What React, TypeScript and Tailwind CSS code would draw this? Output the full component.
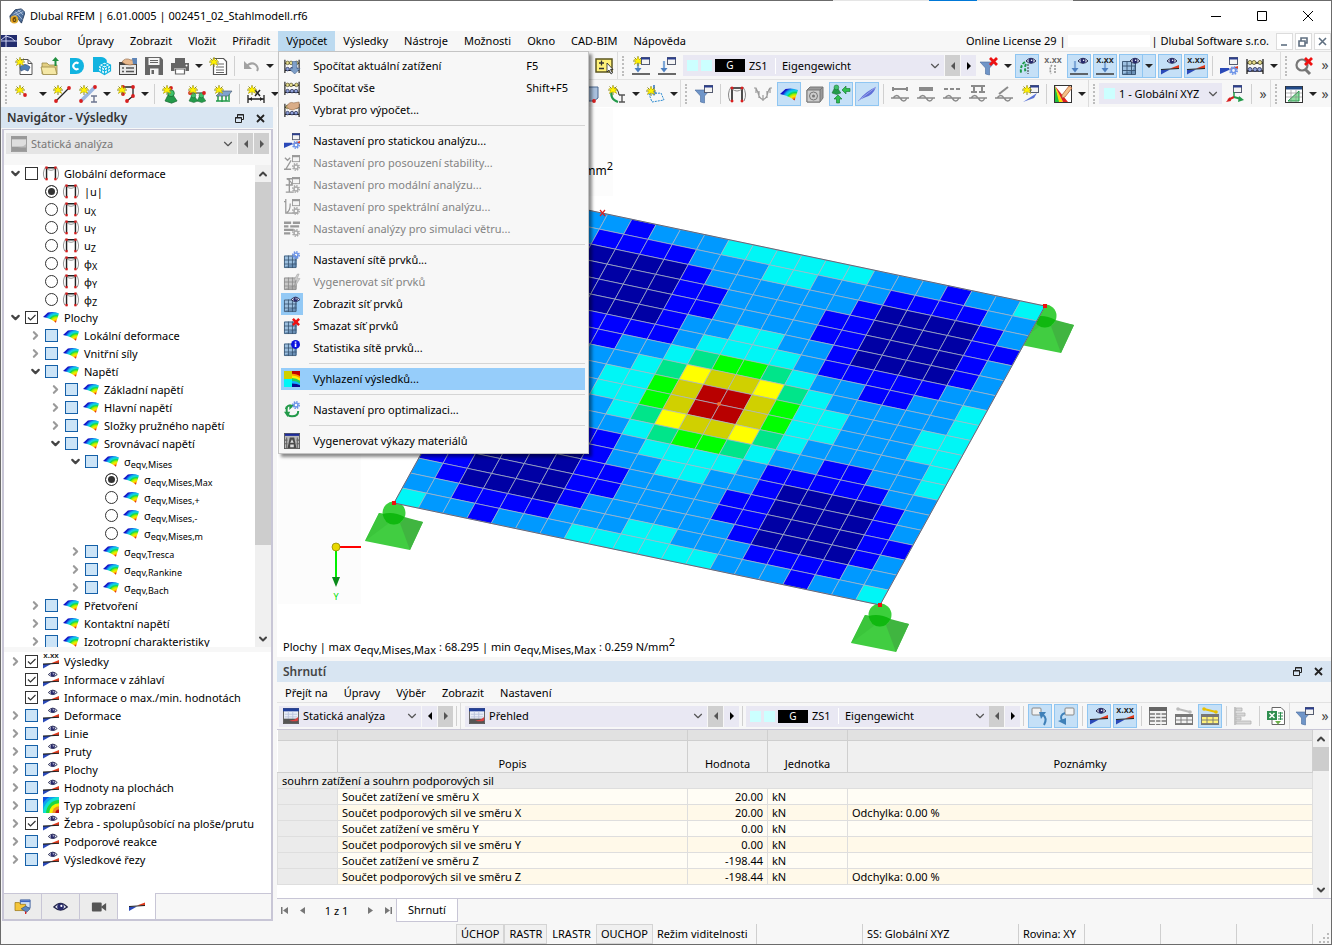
import type { ReactNode } from "react";
import { ChevronDown, ChevronRight, ChevronUp } from "lucide-react";
import clsx from "clsx";

/* ---------- icon fragments, all drawn on an 18 x 18 grid ---------- */

const Star = ({ x = 0, y = 0 }: { x?: number; y?: number }) => (
  <g transform={`translate(${x} ${y})`}>
    <path d="M5 0v10M0 5h10M1.5 1.5l7 7M8.5 1.5l-7 7" stroke="#8a8a20" strokeWidth="1" />
    <path d="M5 1l1.2 2.4L9 3.5 7.2 5.2 8.5 8 5 6.8 1.5 8l1.200-2.800L1 3.500l2.800-.1z" fill="#fff200" stroke="#c8b400" strokeWidth=".5" />
  </g>
);

const Win = ({ x = 9, y = 0, gray = false }: { x?: number; y?: number; gray?: boolean }) => (
  <g transform={`translate(${x} ${y})`}>
    <rect x=".5" y=".5" width="8" height="7" fill="#f4f4f4" stroke={gray ? "#999" : "#555c70"} />
    <path d="M0 1.500h9" stroke={gray ? "#999" : "#2c3f8f"} strokeWidth="2" />
  </g>
);

const Eye = ({ x = 8, y = 0 }: { x?: number; y?: number }) => (
  <g transform={`translate(${x} ${y})`}>
    <path d="M0 4Q5-1.500 10 4 5 8.500 0 4z" fill="#e6e9f7" stroke="#23264a" />
    <circle cx="5" cy="3.800" r="2.500" fill="#27296b" />
    <circle cx="5.600" cy="3.200" r=".8" fill="#fff" />
  </g>
);

const Gear = ({ x = 9, y = 9, gray = false }: { x?: number; y?: number; gray?: boolean }) => (
  <g transform={`translate(${x} ${y})`} stroke={gray ? "#aaa" : "#6c93e8"} fill="none">
    <circle cx="4.5" cy="4.5" r="3.6" strokeWidth="1.8" strokeDasharray="1.6 1.2" />
    <circle cx="4.5" cy="4.5" r="2.2" strokeWidth="1.6" />
  </g>
);

const Wedge = ({ y = 0 }: { y?: number }) => (
  <g transform={`translate(0 ${y})`}>
    <path d="M0 12.500h9L0 17.500z" fill="#2a49b8" />
    <path d="M9 11.500L18 8v4z" fill="#e03a1c" />
    <path d="M0 12.500L18 11.500" stroke="#222" strokeWidth="1.2" />
  </g>
);

const Xxx = ({ gray = false }: { gray?: boolean }) => (
  <text x="9" y="6" textAnchor="middle" fontSize="9" fontWeight="700" fontFamily="Liberation Sans, sans-serif" fill={gray ? "#666" : "#222"}>
    x.xx
  </text>
);

const Mesh = ({ gray = false }: { gray?: boolean }) => (
  <g>
    <rect x="0" y="4" width="14" height="14" fill={gray ? "#c9c9c9" : "#9dc0e0"} />
    <path d="M0 17h14V4l-3 9z" fill={gray ? "#aaa" : "#6a90b6"} />
    <path d="M.5 4.500h13v13H.5zM5 4v14M9.500 4v14M0 9h14M0 13.500h14" fill="none" stroke={gray ? "#888" : "#35506e"} strokeWidth=".9" />
  </g>
);

const LoadArrow = ({ x = 6 }: { x?: number }) => (
  <g>
    <path d={`M${x} 4v9`} stroke="#7fa8d8" strokeWidth="2.2" />
    <path d={`M${x - 3.5} 11h7l-3.500 4.500z`} fill="#4c7fc0" />
    <path d="M0 17h18" stroke="#444" strokeWidth="1.6" />
  </g>
);

const Abacus = () => (
  <g>
    <path d="M1 2v15M17 2v15M1 6h16M1 14h16" stroke="#222" strokeWidth="1.3" />
    <g fill="#e6dc8c" stroke="#55502a" strokeWidth=".8">
      <circle cx="4" cy="5.500" r="2" /><circle cx="8" cy="5.500" r="2" /><circle cx="14" cy="5.500" r="2" />
    </g>
    <g fill="#8fa0d8" stroke="#222a50" strokeWidth=".8">
      <circle cx="4" cy="12.500" r="2" /><circle cx="9" cy="12.500" r="2" /><circle cx="13.500" cy="12.500" r="2" />
    </g>
  </g>
);

const Frame = () => (
  <g fill="none">
    <path d="M4 16V3h10v13" stroke="#222" strokeWidth="1.600" />
    <path d="M4 4q5 4 10 0M3 2Q-1.500 9 2 16M15 2q4.500 7 1 14" stroke="#888" strokeWidth="1" />
    <path d="M3 2h2v2H3zM13 2h2v2h-2zM3 15h2v2H3zM13 15h2v2h-2z" fill="#d81e1e" stroke="#d81e1e" strokeWidth=".6" />
  </g>
);

const Surface = () => (
  <g>
    <path d="M0 9L5.500 4Q12 2.500 18 5L14.500 15.500Q10 11 0 9z" fill="url(#rainbow)" />
  </g>
);

const Funnel = () => <path d="M0 5h15L9.500 11v7l-4-1v-6z" fill="#6f95c8" stroke="#47699c" strokeWidth=".6" />;

const RedX = ({ x = 9, y = 0 }: { x?: number; y?: number }) => (
  <path transform={`translate(${x} ${y})`} d="M1 1l7 7M8 1L1 8" stroke="#ee1111" strokeWidth="2.8" />
);

const Cone = ({ x = 0, y = 0, s = 1 }: { x?: number; y?: number; s?: number }) => (
  <g transform={`translate(${x} ${y}) scale(${s})`}>
    <path d="M0 10l3-6h4l4 6-5 2z" fill="#239a4a" stroke="#12602b" strokeWidth=".6" />
    <circle cx="5.500" cy="3" r="3" fill="#3fc06a" stroke="#12602b" strokeWidth=".6" />
  </g>
);

const Node = ({ x, y }: { x: number; y: number }) => <circle cx={x} cy={y} r="1.9" fill="#d81e1e" />;

const Wave = ({ top }: { top: string }) => (
  <g fill="none" stroke="#8a8a8a" strokeWidth="1.4">
    <path d="M0 13h18M2 13q4-5 7 0 4 6 7 0" />
    <path d={top} strokeWidth="2" />
  </g>
);

const Table = ({ hi = false, y = 0 }: { hi?: boolean; y?: number }) => (
  <g>
    <rect x=".5" y={y + 0.5} width="17" height={17 - y} fill={hi ? "#fff27a" : "#f2f2f2"} stroke="#777" />
    <path d={`M0 ${y + 1.5}h18`} stroke="#777" strokeWidth="3" />
    <path d={`M6 ${y}V18M12 ${y}V18M0 ${y + 6}h18M0 ${y + 9.5}h18`} stroke="#777" strokeWidth=".9" />
  </g>
);

const icons: Record<string, ReactNode> = {
  newModel: (
    <g>
      <path d="M5 2.500h8l4 4v11H5z" fill="#fff" stroke="#555" />
      <path d="M13 2.500v4h4" fill="none" stroke="#555" />
      <path d="M5 10q5-5 10 0l-2 4q-4-3-7 0z" fill="#4d7fb5" stroke="#2c4a78" strokeWidth=".7" />
      <Star />
    </g>
  ),
  open: (
    <g>
      <path d="M1 6h5l2 2h8v9H1z" fill="#e3cf83" stroke="#9b8a48" strokeWidth=".8" />
      <path d="M0 10h14l2 7.500H2z" fill="#f5e8a6" stroke="#9b8a48" strokeWidth=".8" />
      <path d="M13.500 9V4H11l3.500-4L18 4h-2.500v5z" fill="#1f8f3f" />
    </g>
  ),
  cloud: (
    <g>
      <path d="M3 1h6a8 8 0 010 16H3z" fill="#11b3e0" />
      <path d="M11.500 6.500a3.200 3.200 0 100 5" fill="none" stroke="#fff" strokeWidth="2" />
    </g>
  ),
  block: (
    <g>
      <path d="M0 0h8a7 7 0 016 4l-4 11H0z" fill="#11b3e0" />
      <path d="M11.500 5l6 3v6l-6 3.500-6-3.500V8z" fill="#d5f2fb" stroke="#11b3e0" strokeWidth="1.200" />
      <path d="M5.500 8l6 3 6-3M11.500 11v6.500M8.500 6.500l6 3v6M14.500 6.500l-6 3v6M5.500 11l6 3 6-3" fill="none" stroke="#11b3e0" />
    </g>
  ),
  form: (
    <g>
      <rect x=".5" y="5.500" width="17" height="12" fill="#e8e8e8" stroke="#444" />
      <path d="M1 7h16" stroke="#444" strokeWidth="2" />
      <path d="M3 11h2M7 11h8M3 14.500h2M7 14.500h8" stroke="#555" strokeWidth="1.500" />
      <path d="M3 5q3-5 9-2l5-1v5l-6 1q-5 0-8-3z" fill="#e8b88c" stroke="#8a6242" strokeWidth=".6" />
      <path d="M13 1h5v6h-4z" fill="#5f86b8" />
    </g>
  ),
  save: (
    <g>
      <path d="M0 0h15.500L18 2.500V18H0z" fill="#666" />
      <path d="M3.500 1h11v7h-11zM5 11.500h8.500V18H5z" fill="#f5f5f5" />
      <path d="M5 3.500h8M5 5.500h8" stroke="#666" />
      <path d="M6.500 13H9v4H6.500z" fill="#666" />
    </g>
  ),
  print: (
    <g>
      <path d="M4 1h10v5H4z" fill="#666" />
      <path d="M0 6h18v8h-3.500v-3h-11v3H0z" fill="#666" />
      <path d="M4.500 12h9v5h-9z" fill="#fff" stroke="#666" strokeWidth="1.200" />
      <circle cx="15.500" cy="8.500" r="1" fill="#fff" />
    </g>
  ),
  newDoc: (
    <g>
      <path d="M4.500 1.500h10l3 3v13h-13z" fill="#fff" stroke="#555" strokeWidth="1.200" />
      <path d="M7 7h8M7 10h8M7 13h8M7 15.500h8" stroke="#666" />
      <Star />
    </g>
  ),
  undo: (
    <g>
      <path d="M4 10Q9 4 14 8q3 3 1 6" fill="none" stroke="#a2a2a2" strokeWidth="2" />
      <path d="M2 4v8h8z" fill="#a2a2a2" />
    </g>
  ),
  note: (
    <g>
      <rect x="1" y="2" width="16" height="13" fill="#fff27a" stroke="#5c5620" strokeWidth="1.500" />
      <path d="M4 6h5M6.500 3.500v5M4 11.500h5" stroke="#333" strokeWidth="1.300" />
      <path d="M12 6v9l2-2 2 4 1.500-1-2-3.500H18z" fill="#fff" stroke="#222" strokeWidth=".8" />
    </g>
  ),
  loadNew: <g><LoadArrow /><Star x={1} y={-1} /><Win /></g>,
  load: <g><LoadArrow /><Win /></g>,
  filterX: <g><Funnel /><RedX /></g>,
  filterWin: <g><Funnel /><Win /></g>,
  supEye: <g><path d="M7 5q-5 3-4 11M8 7q-2 4 0 9" stroke="#1f9a4a" strokeWidth="2" fill="none" strokeDasharray="3 1.500" /><path d="M10 7v10" stroke="#333" strokeDasharray="2 1" /><Eye /></g>,
  supXxx: <g><Xxx gray /><path d="M8 8q-3 3-1 9M11 8v9" stroke="#999" strokeWidth="1.600" fill="none" strokeDasharray="2 1" /></g>,
  loadEye: <g><LoadArrow x={5} /><Eye /></g>,
  loadXxx: <g><LoadArrow x={9} /><Xxx /></g>,
  meshEye: <g><Mesh /><Eye /></g>,
  meshGear: <g><Mesh /><Gear y={-1} /></g>,
  meshBolt: <g><Mesh gray /><path d="M15 0l-4 7h3l-2 8 6-10h-3l2-5z" fill="#ccc" stroke="#999" strokeWidth=".5" /></g>,
  meshX: <g><Mesh /><RedX /></g>,
  meshInfo: (
    <g>
      <Mesh />
      <circle cx="13" cy="5" r="5" fill="#0b12e0" />
      <path d="M13 4v4M13 1.800v1.300" stroke="#fff" strokeWidth="1.800" />
    </g>
  ),
  resEye: <g><Wedge /><Eye x={6} y={0} /></g>,
  resXxx: <g><Wedge /><Xxx /></g>,
  wedge: <Wedge y={-3} />,
  calcSet: <g><path d="M0 11h9v2L0 17z" fill="#2a49b8" /><path d="M9 12l9-3v3z" fill="#e03a1c" /><Win /><Gear /></g>,
  abacus: <Abacus />,
  abacusDown: <g><Abacus /><path d="M9.500 4h5v8H18l-6 6-6-6h3.500z" fill="#7e9fc8" stroke="#4c6a94" strokeWidth=".7" /></g>,
  abacusHand: <g><Abacus /><path d="M3 5q3-6 8-4l6-1v6l-7 3q-5 0-7-4z" fill="#d9ad88" stroke="#8a6242" strokeWidth=".6" /></g>,
  stability: <g><path d="M1 3l3 3 3-3M2 16l6-10M0 16h8" stroke="#999" strokeWidth="1.500" fill="none" /><Win gray /><Gear gray /></g>,
  modal: <g><path d="M6 1v16M2 17h9M3 2q6 3 6 7M2 9h8M3 2h6" stroke="#999" strokeWidth="1.500" fill="none" /><Win gray /><Gear gray /></g>,
  spectral: <g><path d="M2 0v16h14M2 3l-2 0M3 15q4-1 4-10" stroke="#999" strokeWidth="1.400" fill="none" /><Win gray /><Gear gray /></g>,
  wind: <g><path d="M0 2h8M10 2h8M0 6h5M7 6h10M0 10h11M0 14h7" stroke="#999" strokeWidth="2.600" /><Gear gray /></g>,
  smooth: (
    <g>
      <rect width="9" height="9" fill="#d0d000" /><rect y="9" width="9" height="9" fill="#00f6f6" />
      <rect x="9" width="9" height="18" fill="#c00000" />
      <path d="M9 3q6 0 9 3v12H9z" fill="#ff9a00" /><path d="M9 5q5 0 9 3v10H9z" fill="#fff200" />
      <path d="M9 8q5 0 9 3v7H9z" fill="#20d060" /><path d="M9 11q5 0 9 3v4H9z" fill="#10b0ff" /><path d="M9 14q6 0 9 2v2H9z" fill="#0a0a90" />
    </g>
  ),
  optimize: (
    <g>
      <path d="M3 5v5q0 6 6 6 7 0 7-6" fill="none" stroke="#239a4a" strokeWidth="2.200" />
      <path d="M0 11h7l-3 6zM6 3h6L6 9z" fill="#239a4a" /><path d="M8 4Q4 3 2 8" stroke="#239a4a" strokeWidth="2" fill="none" />
      <Gear y={-1} />
    </g>
  ),
  bill: (
    <g>
      <rect x=".5" y=".5" width="17" height="17" fill="#b9b9b9" stroke="#555" />
      <path d="M1 2h16" stroke="#1e2c9a" strokeWidth="2.500" />
      <path d="M3 5v12M15 5v12M1 8h3M1 12h3M14 8h3M14 12h3" stroke="#666" strokeWidth="1.200" />
      <path d="M4 17l2.500-12h5L14 17z" fill="#4a4a4a" /><path d="M9 7l2 4H7zM7 13h4v3H7z" fill="#ddd" />
    </g>
  ),
  search: <g><circle cx="7" cy="8" r="5.500" fill="none" stroke="#777" strokeWidth="2.200" /><path d="M10 12l5 5" stroke="#777" strokeWidth="3" /><RedX /></g>,
  point: <g><Star /><Node x={10} y={10} /></g>,
  line: <g><path d="M3 16L15 4" stroke="#222" strokeWidth="1.300" /><Node x={3} y={16} /><Node x={16} y={3} /><Star /></g>,
  member: (
    <g>
      <path d="M2 16L16 2" stroke="#9ab6e0" strokeWidth="3.500" /><Node x={2} y={16} /><Node x={16} y={2} />
      <path d="M12 11h6M12 17h6M15 11v6" stroke="#6b7490" strokeWidth="1.400" /><Star />
    </g>
  ),
  area: <g><path d="M6 9V2h10v9L10 16" fill="none" stroke="#222" strokeWidth="1.300" /><Node x={6} y={9} /><Node x={6} y={2} /><Node x={16} y={2} /><Node x={16} y={11} /><Node x={10} y={16} /><Star /></g>,
  support: <g><Cone x={3} y={5} s={1.1} /><Node x={9} y={3} /><Star /></g>,
  lineSupport: <g><path d="M1 8h16" stroke="#222" /><Cone x={1} y={8} s={0.8} /><Cone x={9} y={8} s={0.8} /><Node x={2} y={8} /><Node x={16} y={8} /><Star /></g>,
  areaSupport: <g><path d="M4 11v5M8 11v6M12 11v5M15 9v6M2 16h14" stroke="#239a4a" strokeWidth="1.500" /><path d="M2 11l5-5h11l-4 5z" fill="#7fa3cf" stroke="#456" strokeWidth=".6" /><Star /></g>,
  dim: <g><path d="M1 10v8M17 10v8M1 14h16" stroke="#222" strokeWidth="1.300" /><path d="M2 14l3-2v4zM16 14l-3-2v4z" fill="#222" /><path d="M8 5l5 6M13 5l-5 6" stroke="#222" strokeWidth="1.500" /><Star /></g>,
  cube: <g><path d="M1 5l5-3h10v11l-4 3H1z" fill="#a9c0dd" stroke="#4a6890" /><Node x={12} y={16} /></g>,
  arc: <g><path d="M4 4q-3 10 6 13" fill="none" stroke="#239a4a" strokeWidth="2" /><path d="M11 10h6M11 17h6M14 10v7" stroke="#555" strokeWidth="1.400" /><path d="M6 3q4 0 5 7" fill="none" stroke="#333" /><Star /></g>,
  areaLoad: <g><path d="M3 9l12-1 3 7-12 2z" fill="none" stroke="#2c8ad0" strokeDasharray="2 1" /><path d="M8 0v8" stroke="#5d92cf" strokeWidth="2" /><path d="M5 7h6l-3 4z" fill="#5d92cf" /><Star y={1} /></g>,
  frame: <Frame />,
  valley: <path d="M0 3h2q2 4 3 8 4 7 8 0 2-8 3-8h2M2 3v5M5 6v7M9 10v6M13 6v7M16 3v5" fill="none" stroke="#9a9a9a" strokeWidth="1.200" />,
  surface: <Surface />,
  solid: (
    <g>
      <path d="M1 5l3-3h13v11l-3 4H1z" fill="#9a9a9a" stroke="#777" />
      <path d="M1 5h13v12H1zM14 5l3-3" fill="#ccc" stroke="#777" />
      <circle cx="7.500" cy="11" r="4" fill="none" stroke="#777" /><circle cx="7.500" cy="11" r="1.500" fill="#777" />
    </g>
  ),
  reactions: (
    <g>
      <Cone x={0} y={0} s={0.8} />
      <path d="M10 5l4-4v2.500h4v3h-4V9zM6 10l4 4H7.500v4h-3v-4H2z" fill="#2fc04f" stroke="#12702b" strokeWidth=".6" />
    </g>
  ),
  plane: <g><path d="M1 15Q8 6 18 2q-3 8-10 10z" fill="#5f6fd8" /><path d="M0 16L18 2" stroke="#98a4ea" /></g>,
  wave1: <Wave top="M2 4h14M2 2v4M16 2v4" />,
  wave2: <Wave top="M2 3h14M2 5h14" />,
  wave3: <Wave top="M1 4h4M7 4h4M13 4h4" />,
  wave4: <Wave top="M2 1h14M5 1v6M13 1v6M2 7h6M10 7h6" />,
  wave5: <Wave top="M4 9l9-7" />,
  starWin: <g><path d="M2 17L16 8l-3 5z" fill="#5a74d8" /><Win /><Star x={1} /></g>,
  colors: (
    <g>
      <rect x=".5" y=".5" width="17" height="17" fill="#fff" stroke="#333" />
      <path d="M1 1v16h5z" fill="#20c040" /><path d="M1 1l8 16H5z" fill="#f5e000" /><path d="M1 1l13 16H9z" fill="#e02020" />
      <path d="M8 10l7-9 3 2-7 9-3 1z" fill="#f4c088" stroke="#b0542a" strokeWidth=".7" />
    </g>
  ),
  axes: <g><Win x={7} /><path d="M8 12V7" stroke="#239a4a" strokeWidth="1.500" /><path d="M8 12L2 15" stroke="#d81e1e" strokeWidth="2" /><path d="M8 12l7 2" stroke="#239a4a" strokeWidth="2" /><path d="M4 12l1 4-5 1z" fill="#d81e1e" /><path d="M13 11l5 4-6 2z" fill="#239a4a" /></g>,
  sheet: (
    <g>
      <rect x=".5" y="1.500" width="17" height="16" fill="#fff" stroke="#333" /><path d="M1 3h16" stroke="#224a88" strokeWidth="3" />
      <path d="M3 16L14 6v10z" fill="#8fe0a0" stroke="#239a4a" />
      <path d="M1 8h16M1 12h16M6 5v12M11 5v12" stroke="#888" strokeWidth=".6" />
    </g>
  ),
  folderView: <g><path d="M6 1h11v9H6z" fill="#cfe0f5" stroke="#3c5c9a" /><path d="M6 2.500h11" stroke="#3c66c0" strokeWidth="2" /><path d="M0 4h5l1 2h6v7H0z" fill="#f4c53a" stroke="#9a7410" strokeWidth=".8" /><path d="M7 11l5-3 5 3-4 4z" fill="#5d88c0" stroke="#2c4a78" strokeWidth=".7" /><path d="M12 14v3" stroke="#d81e1e" strokeWidth="1.500" /></g>,
  eye: <g transform="translate(1 3) scale(1.5)"><Eye x={0} /></g>,
  camera: <g><rect x="1" y="4" width="11" height="10" rx="1" fill="#555" /><path d="M11 9l6-4.500v9z" fill="#555" /></g>,
  contour: (
    <svg width="18" height="18" viewBox="0 0 18 18">
      <rect width="18" height="18" fill="#1050e0" />
      <circle cx="18" cy="18" r="21" fill="#10a0f0" /><circle cx="18" cy="18" r="18" fill="#10e0d0" /><circle cx="18" cy="18" r="14.500" fill="#20d840" />
      <circle cx="18" cy="18" r="11" fill="#f4f000" /><circle cx="18" cy="18" r="7.500" fill="#f09020" /><circle cx="18" cy="18" r="4" fill="#c01010" />
    </svg>
  ),
  result: (
    <g>
      <rect x=".5" y=".5" width="17" height="17" fill="#e9eef8" stroke="#555" />
      <path d="M0 2h18" stroke="#22409a" strokeWidth="3.500" /><path d="M2 7h14M2 10h14M6 4v8M11 4v8" stroke="#b9c2dc" /><path d="M1 12h16v5H1z" fill="#555" />
      <path d="M7 14q6 0 10-4v4q-4 2-10 0z" fill="#e04040" />
    </g>
  ),
  resultGray: (
    <g>
      <rect x=".5" y=".5" width="17" height="17" fill="#dedede" stroke="#999" /><path d="M0 2h18" stroke="#999" strokeWidth="3.500" />
      <path d="M1 12h16v5H1z" fill="#999" /><path d="M7 13q6 0 10-4v4z" fill="#bbb" />
    </g>
  ),
  jumpUp: <g><rect x="1" y="1" width="9" height="7" rx="1" fill="#f2f2f2" stroke="#888" /><path d="M13 18q4-7-2-11" fill="none" stroke="#3f80b8" strokeWidth="2" /><path d="M8 5h7l-5 7z" fill="#3f80b8" /></g>,
  jumpDown: <g><rect x="8" y="1" width="9" height="7" rx="1" fill="#f2f2f2" stroke="#888" /><path d="M8 6q-6 2-3 8" fill="none" stroke="#3f80b8" strokeWidth="2" /><path d="M1 14l8-3v7z" fill="#3f80b8" /></g>,
  table: (
    <g>
      <rect x=".5" y=".5" width="17" height="17" fill="#f2f2f2" stroke="#777" /><path d="M0 2h18" stroke="#666" strokeWidth="4" />
      <path d="M0 7h18M0 10.500h18M0 14h18" stroke="#777" strokeWidth="1.600" /><path d="M6.500 4v14M12 4v14" stroke="#f2f2f2" strokeWidth="1.200" />
    </g>
  ),
  tableBar: <g><Table y={7} /><path d="M3 2l12 3" stroke="#bbb" strokeWidth="2" /><circle cx="3" cy="2" r="1.800" fill="#bbb" /><circle cx="15" cy="5" r="1.800" fill="#bbb" /></g>,
  tableBarOn: <g><Table y={7} hi /><path d="M3 2l12 3" stroke="#e8c000" strokeWidth="2" /><circle cx="3" cy="2" r="1.800" fill="#e8c000" /><circle cx="15" cy="5" r="1.800" fill="#e8c000" /></g>,
  bars: <g fill="#d8d8d8" stroke="#b4b4b4" strokeWidth=".8"><path d="M1 0v18" strokeWidth="1.500" /><path d="M2 1h6v3H2zM2 6h9v3H2zM2 10h5v3H2zM2 14h15v3H2z" /></g>,
  excel: (
    <g>
      <path d="M5 .5h9l3.500 3.500v13.500H5z" fill="#fff" stroke="#666" /><path d="M0 4h10v9H0z" fill="#2f8f50" />
      <path d="M2.500 6l5 5M7.500 6l-5 5" stroke="#fff" strokeWidth="1.500" />
      <path d="M11 6h5M11 9h5M11 12h5M13.500 5v8" stroke="#2f8f50" /><path d="M8 14h6l-3 3.500z" fill="#6cb04a" />
    </g>
  ),
};

const Icon = ({ name, small }: { name: string; small?: boolean }) => (
  <svg viewBox="0 0 18 18" className={clsx("shrink-0 overflow-visible", small ? "size-4" : "size-[18px]")} aria-hidden="true">
    {icons[name]}
  </svg>
);

/* ---------- toolbar parts ---------- */

const Tool = ({ icon, on }: { icon: string; on?: boolean }) => (
  <button
    type="button"
    aria-label={icon}
    className={clsx(
      "mx-px flex h-6 w-6 shrink-0 items-center justify-center border",
      on ? "border-[#8fc6f2] bg-[#c5e0f7]" : "border-transparent"
    )}
  >
    <Icon name={icon} />
  </button>
);

const Arrow = () => (
  <button type="button" aria-label="více" className="flex h-6 w-3 shrink-0 items-center justify-center">
    <svg viewBox="0 0 8 4" className="h-1 w-2"><path d="M0 0h8L4 4z" fill="#222" /></svg>
  </button>
);

const Sep = () => <div className="mx-[3px] h-5 w-px shrink-0 bg-[#d0d0d0]" />;
const Grip = () => <div className="mx-1 h-5 w-0 shrink-0 border-l-2 border-dotted border-[#bdbdbd]" />;
const More = () => <button type="button" aria-label="další" className="w-3 shrink-0 text-[14px] text-[#444]">»</button>;

const Step = ({ dir, off }: { dir: "l" | "r"; off?: boolean }) => (
  <button
    type="button"
    aria-label={dir === "l" ? "předchozí" : "další"}
    className={clsx("flex h-[21px] w-[15px] shrink-0 items-center justify-center", off ? "bg-[#cfcfcf]" : "bg-[#e9e8f3]")}
  >
    <svg viewBox="0 0 4 8" className="h-2 w-1">
      <path d={dir === "l" ? "M4 0v8L0 4z" : "M0 0v8l4-4z"} fill={off ? "#555" : "#000"} />
    </svg>
  </button>
);

const Pick = ({ value, className, disabled }: { value: string; className?: string; disabled?: boolean }) => (
  <span className={clsx("flex h-[21px] min-w-0 items-center", className)}>
    <select aria-label={value} disabled={disabled} className="w-full min-w-0 appearance-none bg-transparent outline-none">
      <option>{value}</option>
    </select>
    <ChevronDown className="mr-[2px] size-[14px] shrink-0 text-[#555]" strokeWidth={2} />
  </span>
);

const LoadCase = ({ className }: { className: string }) => (
  <div className={clsx("flex h-[21px] shrink-0 items-center bg-[#e9e8f3] pl-1", className)}>
    <span className="mr-[3px] size-[11px] bg-[#ccffff]" />
    <span className="mr-[3px] size-[11px] bg-[#ccffff]" />
    <span className="w-[30px] bg-black text-center text-[10px] leading-[13px] text-white">G</span>
    <span className="ml-1 w-[26px]">ZS1</span>
    <span className="mr-[6px] h-4 w-px bg-white" />
    <Pick value="Eigengewicht" className="grow" />
  </div>
);

/* ---------- calculation menu ---------- */

type Item = { icon: string; text: string; key?: string; off?: boolean; on?: boolean; hot?: boolean };

const menu: Item[][] = [
  [
    { icon: "abacusDown", text: "Spočítat aktuální zatížení", key: "F5" },
    { icon: "abacus", text: "Spočítat vše", key: "Shift+F5" },
    { icon: "abacusHand", text: "Vybrat pro výpočet..." },
  ],
  [
    { icon: "calcSet", text: "Nastavení pro statickou analýzu..." },
    { icon: "stability", text: "Nastavení pro posouzení stability...", off: true },
    { icon: "modal", text: "Nastavení pro modální analýzu...", off: true },
    { icon: "spectral", text: "Nastavení pro spektrální analýzu...", off: true },
    { icon: "wind", text: "Nastavení analýzy pro simulaci větru...", off: true },
  ],
  [
    { icon: "meshGear", text: "Nastavení sítě prvků..." },
    { icon: "meshBolt", text: "Vygenerovat síť prvků", off: true },
    { icon: "meshEye", text: "Zobrazit síť prvků", on: true },
    { icon: "meshX", text: "Smazat síť prvků" },
    { icon: "meshInfo", text: "Statistika sítě prvků..." },
  ],
  [{ icon: "smooth", text: "Vyhlazení výsledků...", hot: true }],
  [{ icon: "optimize", text: "Nastavení pro optimalizaci..." }],
  [{ icon: "bill", text: "Vygenerovat výkazy materiálů" }],
];

const CalcMenu = () => (
  <div className="absolute top-full left-0 z-20 w-[311px] border border-[#c4c4c4] bg-[#f7f7f7] px-[2px] pt-[3px] pb-px shadow-[3px_3px_3px_rgba(0,0,0,0.45)]">
    {menu.map((group, g) => (
      <div key={g}>
        {g > 0 && <div className="my-1 mr-px ml-7 h-px bg-[#d5d5d5]" />}
        {group.map((it) => (
          <button
            key={it.text}
            type="button"
            disabled={it.off}
            className={clsx("flex h-[22px] w-[304px] items-center text-left", it.hot && "bg-[#96cdfa]", it.off && "text-[#838383]")}
          >
            <span className={clsx("flex size-[22px] items-center justify-center", it.on && "bg-[#93c9f5]")}>
              <Icon name={it.icon} small />
            </span>
            <span className="ml-[10px] w-[213px]">{it.text}</span>
            <span>{it.key}</span>
          </button>
        ))}
      </div>
    ))}
  </div>
);

const MenuBar = () => (
  <div className="flex h-5 items-center">
    <svg viewBox="0 0 16 12" className="h-3 w-4" aria-hidden="true">
      <rect width="16" height="12" fill="#232d6e" />
      <path d="M0 6h16M5 0v12M5 1L0 5M5 1q6 1 9 5" stroke="#dfe4ff" fill="none" strokeWidth=".9" />
    </svg>
    <nav className="-ml-px flex">
      {["Soubor", "Úpravy", "Zobrazit", "Vložit", "Přiřadit", "Výpočet", "Výsledky", "Nástroje", "Možnosti", "Okno", "CAD-BIM", "Nápověda"].map((m) => (
        <div key={m} className="relative">
          <button type="button" className={clsx("h-5 px-2", m === "Výpočet" && "bg-[#bcdaf0]")}>{m}</button>
          {m === "Výpočet" && <CalcMenu />}
        </div>
      ))}
    </nav>
    <span className="ml-auto">Online License 29 |</span>
    <span className="mx-[2px] h-3 w-[82px] bg-white" />
    <span>| Dlubal Software s.r.o.</span>
    <div className="ml-[7px] flex gap-[2px] text-[#5f6f80]">
      {["M4 11h6", "M3 7h6v5H3zM5 7V4h6v5H9", "M4 4l7 7M11 4l-7 7"].map((d) => (
        <button key={d} type="button" aria-label="okno" className="size-[17px] border border-[#dcdcdc] bg-white">
          <svg viewBox="0 0 15 15"><path d={d} fill="none" stroke="currentColor" strokeWidth="1.6" /></svg>
        </button>
      ))}
    </div>
  </div>
);

const Toolbars = () => (
  <>
    <div className="flex h-7 items-center border-t border-[#e2e2e2]">
      <div className="flex w-[616px] shrink-0 items-center">
        <Grip />
        <Tool icon="newModel" /><Tool icon="open" /><Tool icon="cloud" /><Tool icon="block" /><Tool icon="form" /><Tool icon="save" />
        <Tool icon="print" /><Arrow /><Tool icon="newDoc" /><Sep /><Tool icon="undo" /><Arrow />
        <div className="ml-auto"><Tool icon="note" /></div>
      </div>
      <div className="h-full w-px bg-[#dcdcdc]" />
      <Grip />
      <Tool icon="loadNew" /><Tool icon="load" />
      <div className="w-[3px]" />
      <LoadCase className="w-[261px]" />
      <div className="ml-px flex gap-px"><Step dir="l" off /><Step dir="r" /></div>
      <Tool icon="filterX" /><Arrow />
      <Tool icon="supEye" on /><Tool icon="supXxx" /><Tool icon="loadEye" on /><Tool icon="loadXxx" on />
      <div className="mx-px flex border border-[#8fc6f2] bg-[#c5e0f7]">
        <button type="button" aria-label="meshEye" className="flex h-[22px] w-[23px] items-center justify-center border-r border-[#8fc6f2]"><Icon name="meshEye" /></button>
        <button type="button" aria-label="síť" className="flex w-3 items-center justify-center">
          <svg viewBox="0 0 8 4" className="h-1 w-2"><path d="M0 0h8L4 4z" fill="#222" /></svg>
        </button>
      </div>
      <Tool icon="resEye" on /><Tool icon="resXxx" on /><Sep />
      <Tool icon="calcSet" /><Tool icon="abacus" /><Arrow />
      <div className="h-full w-px bg-[#dcdcdc]" /><Grip />
      <Tool icon="search" />
      <div className="ml-auto"><More /></div>
    </div>
    <div className="flex h-7 items-center border-t border-[#e2e2e2]">
      <div className="flex w-[679px] shrink-0 items-center">
        <Grip />
        <Tool icon="point" /><Arrow /><Tool icon="line" /><Tool icon="member" /><Arrow /><Tool icon="area" /><Arrow /><Sep />
        <Tool icon="support" /><Tool icon="lineSupport" /><Tool icon="areaSupport" /><Sep /><Tool icon="dim" /><Arrow />
        <div className="ml-auto flex">
          <Tool icon="cube" /><Tool icon="arc" /><Arrow /><Tool icon="areaLoad" /><Arrow />
        </div>
      </div>
      <div className="h-full w-px bg-[#dcdcdc]" /><Grip />
      <Tool icon="filterWin" /><Sep />
      <Tool icon="frame" /><Tool icon="valley" /><Tool icon="surface" on /><Tool icon="solid" /><Tool icon="reactions" on /><Tool icon="plane" on />
      <Sep />
      <Tool icon="wave1" /><Tool icon="wave2" /><Tool icon="wave3" /><Tool icon="wave4" /><Tool icon="wave5" /><Tool icon="starWin" />
      <Sep /><Tool icon="colors" /><Arrow />
      <div className="h-full w-px bg-[#dcdcdc]" /><Grip />
      <div className="flex h-[21px] w-[123px] shrink-0 items-center bg-[#e9e8f3] pl-[5px]">
        <span className="mr-1 size-[11px] shrink-0 bg-[#ccffff]" />
        <Pick value="1 - Globální XYZ" className="grow" />
      </div>
      <Tool icon="axes" /><Sep />
      <div className="ml-auto flex h-full items-center">
        <More />
        <div className="ml-px h-full w-px bg-[#dcdcdc]" /><Grip />
        <Tool icon="sheet" /><Arrow /><More />
      </div>
    </div>
  </>
);

/* ---------- navigator ---------- */

type Row = { l: number; t: string; sub?: string; icon: string; open?: boolean; leaf?: boolean; radio?: string; mark?: "on" | "off" };

const pads = ["pl-px", "pl-[21px]", "pl-[41px]", "pl-[61px]", "pl-[81px]"];

const tree: Row[] = [
  { l: 0, t: "Globální deformace", icon: "frame", open: true, mark: "off" },
  { l: 1, t: "|u|", icon: "frame", radio: "u", mark: "on" },
  { l: 1, t: "u", sub: "X", icon: "frame", radio: "u" },
  { l: 1, t: "u", sub: "Y", icon: "frame", radio: "u" },
  { l: 1, t: "u", sub: "Z", icon: "frame", radio: "u" },
  { l: 1, t: "φ", sub: "X", icon: "frame", radio: "u" },
  { l: 1, t: "φ", sub: "Y", icon: "frame", radio: "u" },
  { l: 1, t: "φ", sub: "Z", icon: "frame", radio: "u" },
  { l: 0, t: "Plochy", icon: "surface", open: true, mark: "on" },
  { l: 1, t: "Lokální deformace", icon: "surface" },
  { l: 1, t: "Vnitřní síly", icon: "surface" },
  { l: 1, t: "Napětí", icon: "surface", open: true },
  { l: 2, t: "Základní napětí", icon: "surface" },
  { l: 2, t: "Hlavní napětí", icon: "surface" },
  { l: 2, t: "Složky pružného napětí", icon: "surface" },
  { l: 2, t: "Srovnávací napětí", icon: "surface", open: true },
  { l: 3, t: "σ", sub: "eqv,Mises", icon: "surface", open: true },
  { l: 4, t: "σ", sub: "eqv,Mises,Max", icon: "surface", radio: "s", mark: "on" },
  { l: 4, t: "σ", sub: "eqv,Mises,+", icon: "surface", radio: "s" },
  { l: 4, t: "σ", sub: "eqv,Mises,-", icon: "surface", radio: "s" },
  { l: 4, t: "σ", sub: "eqv,Mises,m", icon: "surface", radio: "s" },
  { l: 3, t: "σ", sub: "eqv,Tresca", icon: "surface" },
  { l: 3, t: "σ", sub: "eqv,Rankine", icon: "surface" },
  { l: 3, t: "σ", sub: "eqv,Bach", icon: "surface" },
  { l: 1, t: "Přetvoření", icon: "surface" },
  { l: 1, t: "Kontaktní napětí", icon: "surface" },
  { l: 1, t: "Izotropní charakteristiky", icon: "surface" },
];

const options: Row[] = [
  { l: 0, t: "Výsledky", icon: "resXxx", mark: "on" },
  { l: 0, t: "Informace v záhlaví", icon: "resEye", mark: "on", leaf: true },
  { l: 0, t: "Informace o max./min. hodnotách", icon: "resEye", mark: "on", leaf: true },
  { l: 0, t: "Deformace", icon: "resEye" },
  { l: 0, t: "Linie", icon: "resEye" },
  { l: 0, t: "Pruty", icon: "resEye" },
  { l: 0, t: "Plochy", icon: "resEye" },
  { l: 0, t: "Hodnoty na plochách", icon: "resEye" },
  { l: 0, t: "Typ zobrazení", icon: "contour" },
  { l: 0, t: "Žebra - spolupůsobící na ploše/prutu", icon: "resEye", mark: "on" },
  { l: 0, t: "Podporové reakce", icon: "resEye" },
  { l: 0, t: "Výsledkové řezy", icon: "resEye" },
];

// box and icon sit one pixel above the text
const TreeRow = ({ r }: { r: Row }) => (
  <div className={clsx("flex h-[18px] items-center whitespace-nowrap", pads[r.l])}>
    <span className="flex w-5 justify-center pb-[2px]">
      {!r.radio && !r.leaf && (r.open ? <ChevronDown className="size-[13px] text-[#444]" strokeWidth={4} /> : <ChevronRight className="size-[13px] text-[#9a9a9a]" strokeWidth={4} />)}
    </span>
    <label className="flex items-center">
      <span className="pb-[2px]">
        {r.radio ? (
          <input
            type="radio"
            name={r.radio}
            defaultChecked={r.mark === "on"}
            className="block size-[13px] appearance-none rounded-full border border-[#333] bg-white checked:bg-[#333] checked:shadow-[inset_0_0_0_2px_white]"
          />
        ) : (
          <span className="grid">
            <input
              type="checkbox"
              defaultChecked={r.mark === "on"}
              className={clsx("col-start-1 row-start-1 size-[13px] appearance-none border", r.mark ? "border-[#333] bg-white" : "border-[#1560a8] bg-[#cce4f7]")}
            />
            {r.mark === "on" && (
              <svg viewBox="0 0 13 13" className="pointer-events-none col-start-1 row-start-1 size-[13px]">
                <path d="M3 6.500l2.500 2.500L10.500 4" fill="none" stroke="#333" strokeWidth="1.2" />
              </svg>
            )}
          </span>
        )}
      </span>
      <span className="mr-[5px] ml-[5px] pb-[2px]"><Icon name={r.icon} small /></span>
      <span>
        {r.t}
        {r.sub && <span className="relative top-[2px] text-[9px]">{r.sub}</span>}
      </span>
    </label>
  </div>
);

const DockButtons = () => (
  <span className="ml-auto flex gap-3 pr-2 text-[#222]">
    <button type="button" aria-label="uvolnit">
      <svg viewBox="0 0 9 9" className="size-[9px]"><path d="M.5 3.500h6v5h-6zM2.500 3V.5h6v5H7M2 1h7M0 4h7" fill="none" stroke="currentColor" /></svg>
    </button>
    <button type="button" aria-label="zavřít">
      <svg viewBox="0 0 9 9" className="size-[9px]"><path d="M1 1l7 7M8 1L1 8" stroke="currentColor" strokeWidth="1.8" /></svg>
    </button>
  </span>
);

const Scroll = ({ thumb }: { thumb: string }) => (
  <div className="flex w-4 shrink-0 flex-col bg-[#f0f0f0]">
    <button type="button" aria-label="nahoru" className="flex h-[17px] shrink-0 items-center justify-center"><ChevronUp className="size-3 text-[#444]" strokeWidth={4} /></button>
    <div className={clsx("bg-[#cdcdcd]", thumb)} />
    <button type="button" aria-label="dolů" className="mt-auto flex h-[17px] shrink-0 items-center justify-center"><ChevronDown className="size-3 text-[#444]" strokeWidth={4} /></button>
  </div>
);

const Navigator = () => (
  <aside className="flex w-[272px] shrink-0 flex-col">
    <h2 className="flex h-[21px] items-center bg-[#d8e5f2] pt-px pl-[6px] text-[12px] font-semibold text-[#333]">
      Navigátor - Výsledky <DockButtons />
    </h2>
    <div className="mt-px mb-[23px] ml-px flex min-h-0 grow flex-col border-2 border-t border-[#c8c6d6] pt-[3px]">
      <div className="mr-[2px] ml-[2px] flex h-[21px] items-center gap-px">
        <div className="flex h-full grow items-center bg-[#e5e5e5] pl-[5px] text-[#777]">
          <Icon name="resultGray" small />
          <Pick value="Statická analýza" className="ml-1 grow" disabled />
        </div>
        <Step dir="l" off /><Step dir="r" off />
      </div>
      <div className="mt-[11px] flex h-[482px] shrink-0 bg-white">
        <div className="min-w-0 grow overflow-hidden">{tree.map((r, i) => <TreeRow key={i} r={r} />)}</div>
        <Scroll thumb="h-[363px]" />
      </div>
      <div className="mt-[5px] grow bg-white pt-px">{options.map((r) => <TreeRow key={r.t} r={r} />)}</div>
      <div className="flex h-[26px] border-t border-[#c8c6d6]">
        {["folderView", "eye", "camera", "wedge"].map((n) => (
          <button
            key={n}
            type="button"
            aria-label={n}
            className={clsx("flex w-[38px] items-center justify-center border-r border-[#c8c6d6]", n === "wedge" ? "-mt-px bg-white" : "bg-[#ececec]")}
          >
            <Icon name={n} small />
          </button>
        ))}
      </div>
    </div>
  </aside>
);

/* ---------- model view ---------- */

const palette: Record<string, string> = {
  D: "#0000a4", B: "#0000ff", L: "#0099ff", C: "#00f6f6", T: "#00e58a", G: "#00ff00", Y: "#ffff00", O: "#d0d000", R: "#b80000",
};

// one quarter of the plate, the rest is symmetric
const quarter = [
  "CLLBLLLCCC",
  "LLBBBBLLLC",
  "LBDDDDBLLL",
  "BBDDDDBBLL",
  "LBDDDDBBLL",
  "LBDDDDBLLC",
  "LLBBBBBLCC",
  "CLLBBLLCTG",
  "CLLLLLCTYO",
  "CCLLLCCGOR",
];

const N = 20;
const at = (i: number, j: number): [number, number] => [282 + 24.3 * i - 8.25 * j, 97 + 5.1 * i + 14.95 * j];
const fold = (n: number) => (n < N / 2 ? n : N - 1 - n);

const Support = ({ i, j }: { i: number; j: number }) => {
  const [x, y] = at(i, j);
  return (
    <g transform={`translate(${x} ${y})`}>
      <path d="M-15 10L29 19 16 47-29 38z" fill="#41cd41" />
      <path d="M3 12L29 19 16 47z" fill="#40b540" />
      <path d="M-15 10L3 14-29 38z" fill="#3bc53b" />
      <circle cy="10" r="11.5" fill="#3ccf3c" />
      <path d="M-11.500 11q11-3 22 3-4 8-11 7.500-9-.5-11-10.500z" fill="#10b810" />
    </g>
  );
};

const ModelView = () => {
  const cells = [];
  for (let j = 0; j < N; j++)
    for (let i = 0; i < N; i++)
      cells.push(
        <polygon
          key={`${i}-${j}`}
          points={[at(i, j), at(i + 1, j), at(i + 1, j + 1), at(i, j + 1)].join(" ")}
          fill={palette[quarter[fold(j)][fold(i)]]}
          stroke="#a9b4c4"
          strokeWidth=".7"
        />
      );
  const corners: [number, number][] = [[0, 0], [N, 0], [0, N], [N, N]];
  return (
    <main className="relative min-h-0 grow overflow-hidden bg-white">
      <svg className="h-full w-full" role="img" aria-label="Plochy">
        <rect x="1" y="1" width="335" height="88" fill="#fcfcfc" />
        <rect x="1" y="340" width="83" height="157" fill="#fcfcfc" />
        {corners.map(([i, j]) => <Support key={`${i}${j}`} i={i} j={j} />)}
        {cells}
        <polygon points={corners.map((_, k) => at(...corners[[0, 1, 3, 2][k]])).join(" ")} fill="none" stroke="#667" strokeWidth="1" />
        {corners.map(([i, j]) => {
          const [x, y] = at(i, j);
          return <rect key={`${i}${j}`} x={x - 2} y={y - 2} width="4" height="4" fill="#f01010" />;
        })}
        <circle cx="442" cy="297" r="2" fill="#f07030" />
        <path d="M323 103l5 6M328 103l-5 6" stroke="#e02020" strokeWidth="1.2" />
        <path d="M59 440h25" stroke="#ff0000" strokeWidth="2" />
        <path d="M59 440v32" stroke="#00f000" strokeWidth="2" />
        <path d="M55 470h8l-4 10z" fill="#0a8a1a" />
        <circle cx="59" cy="440" r="4" fill="#e8d800" stroke="#8a8000" strokeWidth=".7" />
        <text x="59" y="493" textAnchor="middle" fontSize="9" fill="#00e000">Y</text>
      </svg>
      <p className="absolute top-[54px] left-0 w-[336px] text-right text-[12px] leading-5">N/mm<sup className="text-[11px]">2</sup></p>
      <p className="absolute bottom-0 left-[6px] text-[11px] leading-5 whitespace-nowrap">
        Plochy | max σ<sub className="text-[11px]">eqv,Mises,Max</sub> : 68.295 | min σ<sub className="text-[11px]">eqv,Mises,Max</sub> : 0.259 N/mm<sup className="text-[11px]">2</sup>
      </p>
    </main>
  );
};

/* ---------- summary panel ---------- */

const rows = [
  ["Součet zatížení ve směru X", "20.00", ""],
  ["Součet podporových sil ve směru X", "20.00", "Odchylka: 0.00 %"],
  ["Součet zatížení ve směru Y", "0.00", ""],
  ["Součet podporových sil ve směru Y", "0.00", ""],
  ["Součet zatížení ve směru Z", "-198.44", ""],
  ["Součet podporových sil ve směru Z", "-198.44", "Odchylka: 0.00 %"],
];

const Summary = () => (
  <section className="flex h-[261px] shrink-0 flex-col">
    <h2 className="flex h-[21px] items-center bg-[#d8e5f2] pl-[6px] text-[12px] font-semibold text-[#444]">
      Shrnutí <DockButtons />
    </h2>
    <div className="flex h-5 items-center pt-px">
      {["Přejít na", "Úpravy", "Výběr", "Zobrazit", "Nastavení"].map((m) => <button key={m} type="button" className="px-2">{m}</button>)}
    </div>
    <div className="flex h-[27px] shrink-0 items-center border-t border-[#e2e2e2] pl-[2px]">
      <div className="flex h-[21px] w-[142px] shrink-0 items-center bg-[#e9e8f3] pl-1">
        <Icon name="result" small /><Pick value="Statická analýza" className="ml-1 grow" />
      </div>
      <div className="flex gap-px pl-px"><Step dir="l" /><Step dir="r" off /></div>
      <Sep />
      <div className="mr-1 h-full w-px bg-[#dcdcdc]" />
      <div className="flex h-[21px] w-[242px] shrink-0 items-center bg-[#e9e8f3] pl-1">
        <Icon name="result" small /><Pick value="Přehled" className="ml-1 grow" />
      </div>
      <div className="flex gap-px pl-px"><Step dir="l" off /><Step dir="r" /></div>
      <Sep />
      <LoadCase className="w-[243px]" />
      <div className="flex gap-px"><Step dir="l" off /><Step dir="r" /></div>
      <Sep />
      <Tool icon="jumpUp" on /><Tool icon="jumpDown" on /><Sep />
      <Tool icon="resEye" on /><Tool icon="resXxx" on /><Sep />
      <Tool icon="table" /><Tool icon="tableBar" /><Tool icon="tableBarOn" on /><Sep />
      <Tool icon="bars" /><Sep />
      <Tool icon="excel" />
      <div className="mr-[2px] h-full w-px bg-[#dcdcdc]" />
      <Tool icon="filterWin" />
      <div className="ml-auto"><More /></div>
    </div>
    <div className="flex min-h-0 grow border-y border-[#c8c6d6] bg-white pr-[2px]">
      <div className="grow">
        <table className="w-full table-fixed border-collapse [&_td]:h-4 [&_td]:border [&_td]:border-[#dedede] [&_td]:px-1 [&_td]:py-0 [&_td]:leading-[15px]">
          <colgroup>
            <col className="w-[60px]" /><col className="w-[350px]" /><col className="w-20" /><col className="w-20" /><col />
          </colgroup>
          <thead>
            <tr className="h-[10px] bg-[#e1e1e1]">{[0, 1, 2, 3, 4].map((n) => <th key={n} className="border-r border-b border-[#cfcfcf]" />)}</tr>
            <tr className="h-8 bg-[#f0f0f0]">
              {["", "Popis", "Hodnota", "Jednotka", "Poznámky"].map((h) => (
                <th key={h} className="border-r border-b border-[#cfcfcf] p-0 align-bottom font-normal">{h}</th>
              ))}
            </tr>
          </thead>
          <tbody>
            <tr className="bg-[#ebebeb]"><td colSpan={5}>souhrn zatížení a souhrn podporových sil</td></tr>
            {rows.map(([name, value, note], i) => (
              <tr key={name} className={i % 2 ? "bg-[#fff9e9]" : "bg-[#fffdf5]"}>
                <td className="bg-[#ebebeb]" />
                <td>{name}</td>
                <td className="text-right">{value}</td>
                <td>kN</td>
                <td>{note}</td>
              </tr>
            ))}
          </tbody>
        </table>
      </div>
      <Scroll thumb="h-6" />
    </div>
    <div className="flex h-[23px] shrink-0 items-center">
      <div className="flex w-[119px] items-center justify-between px-1 text-[#777]">
        <button type="button" aria-label="první"><svg viewBox="0 0 7 7" className="size-[7px]"><path d="M0 0h1.500v7H0zM7 0v7L2 3.500z" fill="currentColor" /></svg></button>
        <button type="button" aria-label="předchozí"><svg viewBox="0 0 7 7" className="size-[7px]"><path d="M6 0v7L1 3.500z" fill="currentColor" /></svg></button>
        <span className="px-2 text-black">1 z 1</span>
        <button type="button" aria-label="další"><svg viewBox="0 0 7 7" className="size-[7px]"><path d="M1 0v7l5-3.500z" fill="currentColor" /></svg></button>
        <button type="button" aria-label="poslední"><svg viewBox="0 0 7 7" className="size-[7px]"><path d="M5.500 0H7v7H5.500zM0 0v7l5-3.500z" fill="currentColor" /></svg></button>
      </div>
      <button type="button" className="h-full border-x border-b border-[#c8c6d6] bg-white px-[11px]">Shrnutí</button>
    </div>
  </section>
);

const StatusBar = () => (
  <footer className="-mt-[22px] ml-auto flex h-[22px] w-[875px] shrink-0 items-center pt-px">
    {["ÚCHOP", "RASTR", "LRASTR", "OUCHOP"].map((s) => (
      <button key={s} type="button" className={clsx("h-5 border px-1", s === "LRASTR" ? "border-transparent" : "border-[#d4d4d4] bg-[#f0f0f0]")}>{s}</button>
    ))}
    <span className="w-[104px] border-r border-[#cfcfcf] pl-1 leading-5 whitespace-nowrap">Režim viditelnosti</span>
    <span className="h-5 w-[106px] border-r border-[#cfcfcf]" />
    <span className="w-[156px] border-r border-[#cfcfcf] pl-1 leading-5">SS: Globální XYZ</span>
    <span className="w-[66px] border-r border-[#cfcfcf] pl-1 leading-5 whitespace-nowrap">Rovina: XY</span>
    <span className="h-5 w-[76px] border-r border-[#cfcfcf]" />
    <span className="h-5 w-[76px] border-r border-[#cfcfcf]" />
    <span className="h-5 w-[76px] border-r border-[#cfcfcf]" />
    <svg viewBox="0 0 12 12" className="mt-auto ml-auto size-3"><path d="M8 2h2M8 6h2M4 6h2M8 10h2M4 10h2M0 10h2" stroke="#bbb" strokeWidth="2" /></svg>
  </footer>
);

export default function App() {
  return (
    <div className="flex h-screen min-h-[900px] flex-col overflow-hidden border-x border-b border-[#6b6b6b] bg-[#f7f7f7] font-['Noto_Sans',sans-serif] text-[11px] leading-4 text-black">
      {/* shared gradient for surface icons */}
      <svg className="absolute size-0" aria-hidden="true">
        <radialGradient id="rainbow" gradientUnits="userSpaceOnUse" cx="15" cy="16" r="15">
          <stop offset=".12" stopColor="#d81810" /><stop offset=".2" stopColor="#ff9000" /><stop offset=".32" stopColor="#ffe800" />
          <stop offset=".46" stopColor="#a0f000" /><stop offset=".56" stopColor="#10d850" /><stop offset=".68" stopColor="#10d8e0" />
          <stop offset=".8" stopColor="#10a0f0" /><stop offset=".95" stopColor="#1414c8" />
        </radialGradient>
      </svg>
      <div className="flex h-px shrink-0 bg-[#6b6b6b]">
        <span className="flex-[832]" /><span className="flex-[96] bg-[#e5e5e5]" /><span className="flex-[48] bg-[#0078d7]" />
        <span className="flex-[96] bg-[#e5e5e5]" /><span className="flex-[258]" />
      </div>
      <header className="flex h-[30px] shrink-0 items-center bg-white pl-2">
        <svg viewBox="0 0 18 18" className="mr-1 size-4" aria-hidden="true">
          <path d="M1 9L7 2l7-1 4 4-4 12-4-5-8 3z" fill="#4d6f9c" stroke="#1f3558" />
          <path d="M5 7l9-5M4 10l12-6M7 4l8 9M10 2l6 6" stroke="#c5d5ea" strokeWidth=".8" />
          <circle cx="6" cy="13" r="4.5" fill="#e0a82c" /><text x="6" y="16" fontSize="8" fontWeight="700" textAnchor="middle" fill="#5a3c00">6</text>
        </svg>
        <h1 className="ml-px text-[11px]">Dlubal RFEM | 6.01.0005 | 002451_02_Stahlmodell.rf6</h1>
        <div className="ml-auto flex">
          {["M0 5.500h10", "M.5.5h9v9h-9z", "M0 0l10 10M10 0L0 10"].map((d) => (
            <button key={d} type="button" aria-label="okno" className="flex w-[46px] items-center justify-center">
              <svg viewBox="0 0 10 10" className="size-[10px] overflow-visible"><path d={d} fill="none" stroke="#000" /></svg>
            </button>
          ))}
        </div>
      </header>
      <MenuBar />
      <Toolbars />
      <div className="flex min-h-0 grow gap-1">
        <Navigator />
        <div className="flex min-w-0 grow flex-col">
          <ModelView />
          <div className="h-1 shrink-0" />
          <Summary />
          <div className="h-[22px] shrink-0" />
        </div>
      </div>
      <StatusBar />
    </div>
  );
}
